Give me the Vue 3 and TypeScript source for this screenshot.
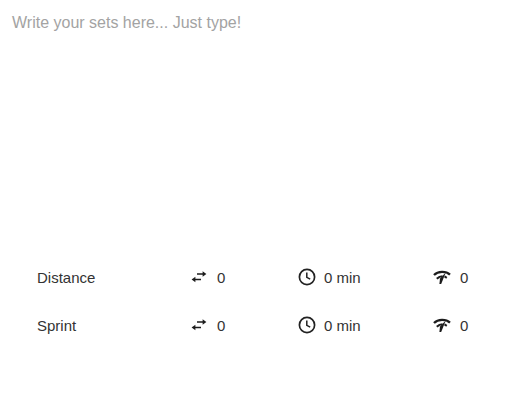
<script setup lang="ts">
interface SetRow { name: string; reps: number; minutes: number; intensity: number }
const rows: SetRow[] = [
  { name: 'Distance', reps: 0, minutes: 0, intensity: 0 },
  { name: 'Sprint', reps: 0, minutes: 0, intensity: 0 },
]
</script>

<template>
  <main class="page">
    <p class="placeholder">Write your sets here... Just type!</p>
    <section class="rows">
      <div v-for="row in rows" :key="row.name" class="row">
        <span class="name">{{ row.name }}</span>
        <span class="stat">
          <svg class="icon" width="16" height="14" viewBox="0 0 16 14">
            <path d="M6 4H12.5" stroke="#1c1c1c" stroke-width="1.5" fill="none" />
            <path d="M11.6 1.2 15.4 4 11.6 6.8Z" fill="#1c1c1c" />
            <path d="M3.5 9.5H10" stroke="#1c1c1c" stroke-width="1.5" fill="none" />
            <path d="M4.4 6.7 .6 9.5 4.4 12.3Z" fill="#1c1c1c" />
          </svg>
          <span class="value">{{ row.reps }}</span>
        </span>
        <span class="stat">
          <svg class="icon" width="18" height="18" viewBox="0 0 18 18">
            <circle cx="9" cy="9" r="7.6" stroke="#222" stroke-width="1.7" fill="none" />
            <path d="M8.8 4.6V9.4L12.2 11.2" stroke="#222" stroke-width="1.5" fill="none" />
          </svg>
          <span class="value">{{ row.minutes }} min</span>
        </span>
        <span class="stat">
          <svg class="icon" width="18" height="16" viewBox="0 0 18 16">
            <path d="M1 6C5 1.8 13 1.8 17 5.6" stroke="#1c1c1c" stroke-width="2.3" fill="none" />
            <path d="M3.8 9.8C5.5 8 7.6 7.2 9.5 7.2" stroke="#1c1c1c" stroke-width="2.1" fill="none" />
            <path d="M11.5 7.4 13.8 8.8" stroke="#1c1c1c" stroke-width="2" fill="none" />
            <path d="M12.8 3.6 8.2 15H6.4L7 9.6Z" fill="#1c1c1c" />
          </svg>
          <span class="value">{{ row.intensity }}</span>
        </span>
      </div>
    </section>
  </main>
</template>

<style scoped>
.page {
  width: 522px;
  height: 414px;
  box-sizing: border-box;
  padding: 14px 0 0;
  font-family: "Liberation Sans", Arial, sans-serif;
  background: #fff;
}
.placeholder {
  margin: 0;
  height: 239px;
  padding-left: 12px;
  font-size: 16px;
  line-height: 18px;
  color: #a3a3a3;
}
.rows {
  display: flex;
  flex-direction: column;
  padding-left: 37px;
}
.row {
  display: grid;
  grid-template-columns: 154px 107px 135px auto;
  align-items: center;
  height: 48px;
  font-size: 15px;
  color: #333;
}
.stat {
  display: flex;
  align-items: center;
}
.stat .icon {
  flex: none;
}
.stat:nth-child(2) .value {
  margin-left: 10px;
}
.stat:nth-child(3) .value {
  margin-left: 8px;
}
.stat:nth-child(4) .value {
  margin-left: 9px;
}
</style>
